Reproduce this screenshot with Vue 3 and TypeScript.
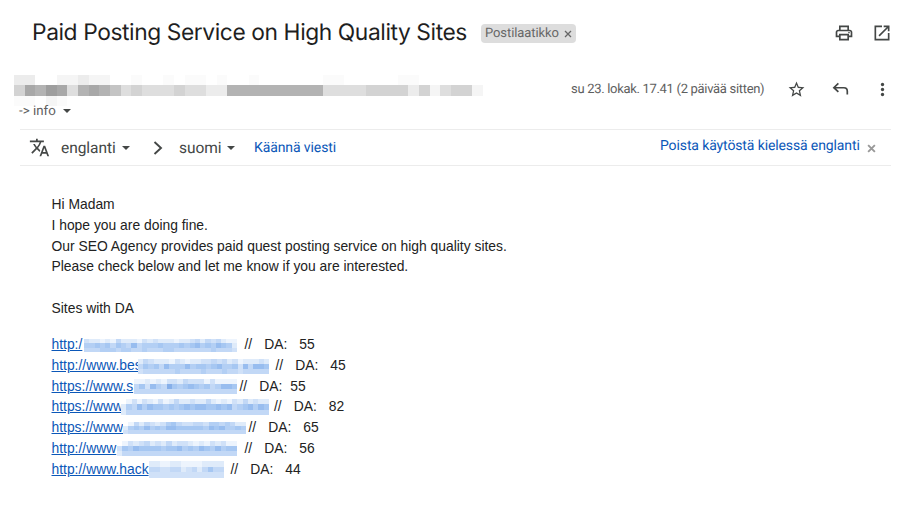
<script setup lang="ts">
interface Site {
  link: string
  linkWidth: number
  blurWidth: number
  blurTop: number
  blurHeight: number
  gap: number
  valueGap: number
  da: number
  cells: string[]
}

// Each digit is an intensity step of the mosaic that hides an address.
const blues = ['#ffffff', '#edf4fd', '#dfebfa', '#d0e1f8', '#c2d8f6', '#b3cff4', '#a6c7f2', '#98bdef', '#86afe9']
const greys = ['#ffffff', '#fbfbfb', '#f5f5f5', '#ececec', '#dedede', '#d3d3d3', '#c4c4c4', '#b3b3b3', '#a8a8a8', '#9e9e9e']

const senderCells = [
  '33002232200100101101001000000110000011000000',
  '58798478764544454433777777777444455553524552',
  '11021000000000000000000000000000000000000000',
]

const sites: Site[] = [
  { link: 'http:/', linkWidth: 32, blurWidth: 153, blurTop: 5, blurHeight: 13, gap: 8, valueGap: 12, da: 55,
    cells: ['32212142221323222122342434211', '55656465474555655565675657652', '44455545544544455444444454443'] },
  { link: 'http://www.bes', linkWidth: 86, blurWidth: 131, blurTop: 4, blurHeight: 15, gap: 7, valueGap: 12, da: 45,
    cells: ['2432221321223343423122232', '4656475557566567556374776', '3444444544445444544344444'] },
  { link: 'https://www.s', linkWidth: 82, blurWidth: 103, blurTop: 3, blurHeight: 15, gap: 3, valueGap: 8, da: 55,
    cells: ['1121213324333131111', '4637548656765645776', '4444444444444444444'] },
  { link: 'https://www', linkWidth: 69, blurWidth: 148, blurTop: 3, blurHeight: 16, gap: 5.5, valueGap: 12, da: 82,
    cells: ['0131321312422322421213242322', '2547576656567677667674567576', '2444444444444444444444444444'] },
  { link: 'https://www', linkWidth: 71, blurWidth: 123, blurTop: 5, blurHeight: 12, gap: 3, valueGap: 12, da: 65,
    cells: ['01424323564334435545422', '25657565776666657675565', '34444444444444444444444'] },
  { link: 'http://www', linkWidth: 65, blurWidth: 120, blurTop: 3, blurHeight: 15, gap: 8, valueGap: 12, da: 56,
    cells: ['0132342324233212132311', '3657666656675657657566', '2444444444444444444444'] },
  { link: 'http://www.hack', linkWidth: 97.5, blurWidth: 74.5, blurTop: 2, blurHeight: 17, gap: 7, valueGap: 12, da: 44,
    cells: ['22112211112222', '44334423424644', '33333333333333'] },
]
</script>

<template>
  <main class="mail">
    <header class="subject-row">
      <h1>Paid Posting Service on High Quality Sites</h1>
      <span class="label">
        <span class="label-text">Postilaatikko</span>
        <svg class="label-x" viewBox="0 0 8 8"><path d="M1 1l6 6M7 1L1 7" /></svg>
      </span>
      <svg class="icon print" viewBox="0 0 24 24"><path d="M19 8h-1V3H6v5H5c-1.660 0-3 1.340-3 3v6h4v4h12v-4h4v-6c0-1.660-1.340-3-3-3zM8 5h8v3H8V5zm8 12v2H8v-4h8v2zm2-2v-2H6v2H4v-4c0-.55.45-1 1-1h14c.55 0 1 .45 1 1v4h-2z" /><circle cx="18" cy="11.500" r="1" /></svg>
      <svg class="icon open" viewBox="0 0 24 24"><path d="M19 19H5V5h7V3H3v18h18v-9h-2v7zM14 3v2h3.590l-9.830 9.830 1.410 1.410L19 6.410V10h2V3h-7z" /></svg>
    </header>

    <section class="meta-row">
      <svg class="sender" viewBox="0 0 44 3" preserveAspectRatio="none" shape-rendering="crispEdges">
        <g v-for="(row, y) in senderCells" :key="y">
          <rect v-for="(cell, x) in row" :key="x" :x="x" :y="y" width="1" height="1" :fill="greys[Number(cell)]" />
        </g>
      </svg>
      <span class="date">su 23. lokak. 17.41 (2 päivää sitten)</span>
      <svg class="icon star" viewBox="0 0 24 24"><path d="M22 9.240l-7.190-.62L12 2 9.190 8.630 2 9.240l5.460 4.730L5.820 21 12 17.270 18.180 21l-1.630-7.030L22 9.240zM12 15.400l-3.760 2.270 1-4.280-3.320-2.880 4.380-.38L12 6.100l1.710 4.040 4.380.38-3.320 2.880 1 4.280L12 15.400z" /></svg>
      <svg class="icon reply" viewBox="0 0 20 16"><path d="M7.500 1.500L2.200 6.500l5.300 5M2.600 6.500H14q4 0 4 4V14.500" /></svg>
      <svg class="icon more" viewBox="0 0 6 18"><circle cx="3" cy="3" r="2" /><circle cx="3" cy="9" r="2" /><circle cx="3" cy="15" r="2" /></svg>
    </section>

    <div class="recipient"><span class="to-name">-&gt; info</span><i class="caret"></i></div>

    <section class="translate-row">
      <svg class="icon translate" viewBox="0 0 24 24"><path d="M12.870 15.070l-2.540-2.510.03-.03A17.520 17.520 0 0 0 14.070 6H17V4h-7V2H8v2H1v2h11.170C11.500 7.920 10.440 9.750 9 11.350 8.070 10.320 7.300 9.190 6.690 8h-2c.73 1.630 1.730 3.170 2.980 4.560l-5.090 5.020L4 19l5-5 3.110 3.110.76-2.040zM18.500 10h-2L12 22h2l1.120-3h4.750L21 22h2l-4.500-12zm-2.620 7l1.620-4.330L19.120 17h-3.240z" /></svg>
      <span class="lang from">englanti</span><i class="caret"></i>
      <svg class="chevron" viewBox="0 0 10 14"><path d="M1.500 1L8 7l-6.500 6" /></svg>
      <span class="lang to">suomi</span><i class="caret"></i>
      <a class="do-translate">Käännä viesti</a>
      <a class="disable">Poista käytöstä kielessä englanti</a>
      <svg class="close" viewBox="0 0 8 8"><path d="M1 1l6 6M7 1L1 7" /></svg>
    </section>

    <article class="body">
      <p>Hi Madam</p>
      <p>I hope you are doing fine.</p>
      <p>Our SEO Agency provides paid quest posting service on high quality sites.</p>
      <p>Please check below and let me know if you are interested.</p>
      <p class="list-title">Sites with DA</p>
      <ul>
        <li v-for="(site, i) in sites" :key="i">
          <a class="link" :style="{ width: site.linkWidth + 'px' }">{{ site.link }}</a>
          <svg class="blur" :viewBox="`0 0 ${site.cells[0].length} 3`" preserveAspectRatio="none" shape-rendering="crispEdges"
            :style="{ width: site.blurWidth + 'px', height: site.blurHeight + 'px', marginTop: site.blurTop + 'px' }">
            <g v-for="(row, y) in site.cells" :key="y">
              <rect v-for="(cell, x) in row" :key="x" :x="x" :y="y" width="1" height="1" :fill="blues[Number(cell)]" />
            </g>
          </svg>
          <span :style="{ marginLeft: site.gap + 'px' }">//</span>
          <span class="da">DA:</span>
          <span :style="{ marginLeft: site.valueGap + 'px' }">{{ site.da }}</span>
        </li>
      </ul>
    </article>
  </main>
</template>

<style>
body { background: #fff; }
</style>

<style scoped>
.mail { width: 900px; height: 510px; overflow: hidden; background: #fff; color: #444746; font-family: Roboto, "Liberation Sans", sans-serif; box-sizing: border-box; text-rendering: geometricPrecision; }
svg { display: block; flex: none; }
.icon { fill: #444746; }
.subject-row { display: flex; align-items: center; height: 66px; padding: 0 8px 0 32px; }
h1 { margin: 0; width: 449px; flex: none; white-space: nowrap; color: #1f1f1f; font: 400 22.800px/32px Inter, sans-serif; letter-spacing: -.42px; }
.label { display: flex; align-items: center; box-sizing: border-box; width: 95px; height: 19px; padding-left: 4px; border-radius: 4px; background: #ddd; color: #666; }
.label-text { width: 79px; font-size: 13px; white-space: nowrap; margin-top: 1px; letter-spacing: -.08px; }
.label-x { width: 8px; height: 8px; margin-top: 2px; fill: none; stroke: #666; stroke-width: 1.300; }
.print { width: 20px; height: 20px; margin-left: auto; }
.open { width: 20px; height: 20px; margin-left: 18px; }
.meta-row { display: flex; align-items: center; height: 38px; padding: 0 15px 0 14px; }
.sender { width: 469px; height: 31px; margin-top: 10px; }
.date { width: 194px; margin: 9px 0 0 88px; color: #5e5e5e; font-size: 13px; letter-spacing: -.31px; white-space: nowrap; }
.star { width: 19px; height: 19px; margin: 9px 0 0 22px; }
.reply { width: 17px; height: 14px; margin: 8px 0 0 26px; fill: none; stroke: #444746; stroke-width: 2; }
.more { width: 5px; height: 15px; margin: 8px 0 0 31px; }
.recipient { display: flex; align-items: center; height: 16px; margin: -1px 0 10px; padding: 0 0 0 19px; font-size: 13.300px; color: #5e5e5e; }
.to-name { width: 38px; white-space: nowrap; }
.recipient .caret { margin-left: 6px; }
.caret { width: 0; height: 0; flex: none; border: 4.500px solid transparent; border-top-color: #444746; border-bottom: 0; }
.translate-row { display: flex; align-items: center; box-sizing: border-box; height: 37px; margin: 0 9px 0 20px; border-top: 1px solid #ececec; border-bottom: 1px solid #ececec; font-size: 15.500px; }
.translate { width: 21px; height: 21px; margin-left: 9px; }
.lang { white-space: nowrap; letter-spacing: -.05px; }
.from { width: 54px; margin-left: 11px; }
.lang + .caret { margin-left: 7px; }
.chevron { width: 10px; height: 14px; margin-left: 23px; fill: none; stroke: #444746; stroke-width: 1.900; }
.to { width: 41px; margin-left: 16px; }
.do-translate { margin-left: 19px; color: #0b57b8; font-size: 14px; white-space: nowrap; letter-spacing: -.1px; }
.disable { width: 201px; margin: -4px 0 0 auto; color: #0b57b8; font-size: 14px; white-space: nowrap; letter-spacing: -.12px; }
.close { width: 9px; height: 9px; margin: 1px 15px 0 6px; fill: none; stroke: #999; stroke-width: 1.700; }
.body { padding: 28px 0 0 51.500px; color: #222; font: 13.870px/20.800px "Liberation Sans", Arial, sans-serif; text-rendering: auto; }
p { margin: 0; }
.list-title { margin-top: 20.800px; }
ul { list-style: none; margin: 15.200px 0 0; padding: 0; }
li { display: flex; align-items: flex-start; height: 20.800px; white-space: nowrap; }
.link { flex: none; color: #0b57b8; text-decoration: underline; }
.da { margin-left: 12px; }
</style>
